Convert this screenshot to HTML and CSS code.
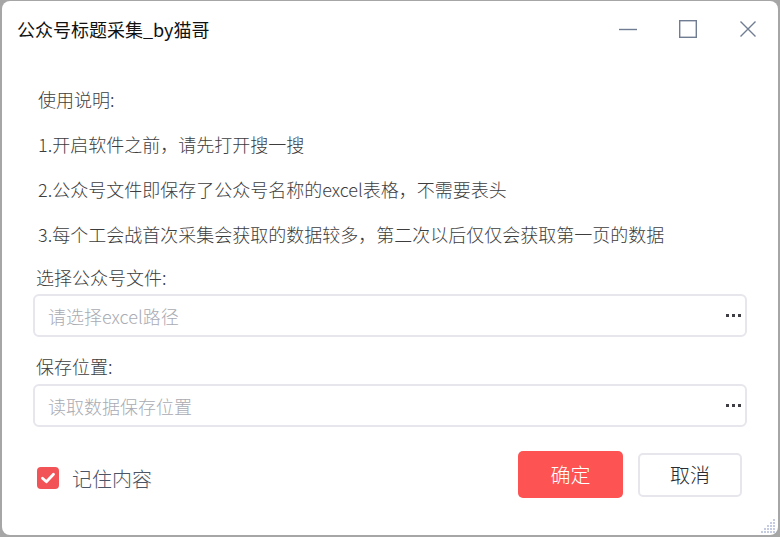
FILE: index.html
```html
<!DOCTYPE html>
<html>
  <head>
    <meta charset="utf-8" />
    <title>公众号标题采集_by猫哥</title>
    <link rel="stylesheet" href="styles.css">
  </head>
  <body>
    <div class="window">
      <!-- Title bar -->
      <header class="titlebar">
        <span class="title">公众号标题采集_by猫哥</span>
        <div class="controls">
          <span class="ctrl">
            <svg width="20" height="20" viewBox="0 0 20 20">
              <path d="M1 10.5H19" stroke="#6f7c92" stroke-width="1.4" fill="none" />
            </svg>
          </span>
          <span class="ctrl">
            <svg width="20" height="20" viewBox="0 0 20 20">
              <rect x="1.7" y="1.7" width="16.6" height="16.6" stroke="#6f7c92" stroke-width="1.4" fill="none" />
            </svg>
          </span>
          <span class="ctrl">
            <svg width="20" height="20" viewBox="0 0 20 20">
              <path d="M2.5 2.5L17.5 17.5M17.5 2.5L2.5 17.5" stroke="#6f7c92" stroke-width="1.4" fill="none" />
            </svg>
          </span>
        </div>
      </header>

      <main class="content">
        <div class="guide">
          <p>使用说明:</p>
          <p>1.开启软件之前，请先打开搜一搜</p>
          <p>2.公众号文件即保存了公众号名称的excel表格，不需要表头</p>
          <p>3.每个工会战首次采集会获取的数据较多，第二次以后仅仅会获取第一页的数据</p>
        </div>

        <label class="label">选择公众号文件:</label>
        <div class="field">
          <input type="text" placeholder="请选择excel路径" />
          <span class="more"><i></i><i></i><i></i></span>
        </div>

        <label class="label label-second">保存位置:</label>
        <div class="field">
          <input type="text" placeholder="读取数据保存位置" />
          <span class="more"><i></i><i></i><i></i></span>
        </div>

        <div class="footer">
          <div class="remember">
            <span class="checkbox">
              <svg width="16" height="16" viewBox="0 0 16 16">
                <path d="M2.5 8.2L6.4 11.8L13.5 4.3" stroke="#fff" stroke-width="2.8" fill="none" stroke-linecap="round" stroke-linejoin="round" />
              </svg>
            </span>
            <span>记住内容</span>
          </div>
          <div class="actions">
            <button class="btn btn-primary">确定</button>
            <button class="btn btn-default">取消</button>
          </div>
        </div>
      </main>

      <!-- Resize grip -->
      <svg class="grip" width="16" height="16" viewBox="0 0 16 16">
        <g fill="#c5cbe0">
          <rect x="13" y="1" width="2" height="2" />
          <rect x="10" y="4" width="2" height="2" />
          <rect x="13" y="4" width="2" height="2" />
          <rect x="7" y="7" width="2" height="2" />
          <rect x="10" y="7" width="2" height="2" />
          <rect x="13" y="7" width="2" height="2" />
          <rect x="4" y="10" width="2" height="2" />
          <rect x="7" y="10" width="2" height="2" />
          <rect x="10" y="10" width="2" height="2" />
          <rect x="13" y="10" width="2" height="2" />
          <rect x="1" y="13" width="2" height="2" />
          <rect x="4" y="13" width="2" height="2" />
          <rect x="7" y="13" width="2" height="2" />
          <rect x="10" y="13" width="2" height="2" />
          <rect x="13" y="13" width="2" height="2" />
        </g>
      </svg>
    </div>
  </body>
</html>
```

FILE: styles.css
```css
/* Basics */
html,
body {
  margin: 0;
  padding: 0;
  height: 100%;
}
body {
  background: #a6a6a6;
  font-family: "Noto Sans CJK SC", "Noto Sans", sans-serif;
  font-weight: 300;
  color: #3d3d3d;
  overflow: hidden;
}
* {
  box-sizing: border-box;
}

/* Window */
.window {
  position: relative;
  margin: 1px 2px 0 2px;
  height: 534px;
  background: #fff;
  border-radius: 8px;
  display: flex;
  flex-direction: column;
}

.titlebar {
  height: 56px;
  display: flex;
  align-items: center;
  justify-content: space-between;
  padding-left: 15px;
}
.title {
  font-size: 18px;
  font-weight: 400;
  line-height: 24px;
  color: #111;
}
.controls {
  display: flex;
  height: 100%;
}
.ctrl {
  width: 60px;
  display: flex;
  align-items: center;
  justify-content: center;
}

/* Content */
.content {
  padding: 0 31px;
}
.guide {
  margin-top: 20px;
  padding-left: 5px;
}
.guide p {
  margin: 0;
  font-size: 18px;
  line-height: 45px;
  color: #3d3d3d;
}

.label {
  display: block;
  margin: 8px 0 5px 3px;
  font-size: 18px;
  line-height: 24px;
  color: #3d3d3d;
}
.label-second {
  margin-top: 17px;
  margin-bottom: 6px;
}

.field {
  display: flex;
  align-items: center;
  height: 43px;
  border: 2px solid #e6e6ec;
  border-radius: 6px;
  padding: 0 4px 0 13px;
}
.field input {
  flex: 1;
  border: none;
  outline: none;
  padding: 0;
  font-family: inherit;
  font-weight: 300;
  font-size: 18px;
  color: #3d3d3d;
  background: transparent;
}
.field input::placeholder {
  color: #a9abb3;
}
.more {
  display: flex;
  gap: 3px;
}
.more i {
  display: block;
  width: 3px;
  height: 3px;
  background: #3e3e44;
}

/* Footer */
.footer {
  margin-top: 24px;
  display: flex;
  align-items: center;
  justify-content: space-between;
}
.remember {
  display: flex;
  align-items: center;
  gap: 13px;
  margin: 7px 0 0 4px;
  font-size: 20px;
  color: #4b5565;
}
.checkbox {
  width: 22px;
  height: 22px;
  border-radius: 4px;
  background: #f25356;
  display: flex;
  align-items: center;
  justify-content: center;
}

.actions {
  display: flex;
  align-items: center;
  gap: 15px;
  margin-right: 5px;
}
.btn {
  font-family: inherit;
  font-weight: 300;
  font-size: 20px;
  border-radius: 5px;
  cursor: pointer;
}
.btn-primary {
  width: 105px;
  height: 47px;
  background: #fd5353;
  border: none;
  color: #fff;
}
.btn-default {
  width: 104px;
  height: 44px;
  background: #fff;
  border: 2px solid #e6e6ec;
  color: #2a2a2e;
}

.grip {
  position: absolute;
  right: 2px;
  bottom: 1px;
}
```
